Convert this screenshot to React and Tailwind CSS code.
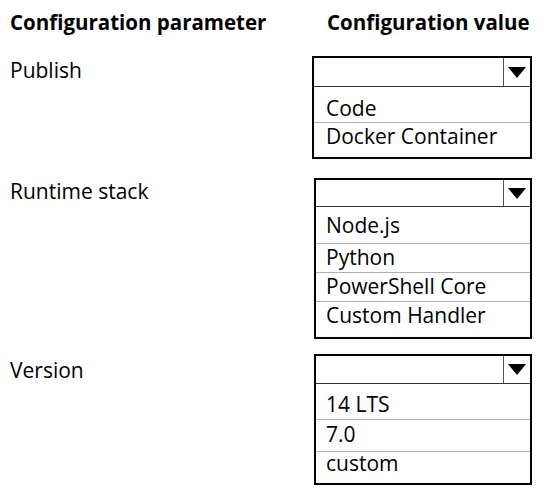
function Dropdown({ items, width, head, rows, pad }) {
  return (
    <div className={`border-2 border-black ${width}`}>
      <div className={`flex ${head} border-b border-[#333]`}>
        <div className="flex-1" />
        <div className="w-[27px] border-l border-[#555] flex items-center justify-center">
          <svg width="18" height="11" viewBox="0 0 18 11">
            <polygon points="0,0 18,0 9,11" fill="#000" />
          </svg>
        </div>
      </div>
      <div className={rows}>
        {items.map((item, i) => (
          <div
            key={item.label}
            className={`${i > 0 ? "border-t border-[#b0b0b0]" : ""} ${item.cls} ${pad}`}
          >
            {item.label}
          </div>
        ))}
      </div>
    </div>
  );
}

export default function App() {
  return (
    <div className="w-[550px] h-[500px] bg-white overflow-hidden text-black text-[21px] font-['Open_Sans',sans-serif]">
      <div className="flex pt-[9px] font-bold text-[20.5px] leading-[26px]">
        <div className="w-[327px] pl-[10px]">Configuration parameter</div>
        <div>Configuration value</div>
      </div>

      <div className="flex mt-[21px]">
        <div className="w-[312px] pl-[10px] leading-[26px] pt-[1px]">Publish</div>
        <Dropdown
          width="w-[220px]"
          head="h-[29px]"
          rows="pt-[8px] pb-[6px]"
          pad="pl-[12px]"
          items={[
            { label: "Code", cls: "leading-[26px] pb-[1px]" },
            { label: "Docker Container", cls: "leading-[26px] pb-[2px]" },
          ]}
        />
      </div>

      <div className="flex mt-[19px]">
        <div className="w-[314px] pl-[10px] leading-[26px]">Runtime stack</div>
        <Dropdown
          width="w-[218px]"
          head="h-[27px]"
          rows="pt-[5px] pb-[7px]"
          pad="pl-[10px]"
          items={[
            { label: "Node.js", cls: "leading-[26px] pb-[5px]" },
            { label: "Python", cls: "leading-[26px] pb-[2px]" },
            { label: "PowerShell Core", cls: "leading-[26px] pb-[2px]" },
            { label: "Custom Handler", cls: "leading-[26px] pb-[2px]" },
          ]}
        />
      </div>

      <div className="flex mt-[15px]">
        <div className="w-[314px] pl-[10px] leading-[26px] pt-[3px]">Version</div>
        <Dropdown
          width="w-[218px]"
          head="h-[28px]"
          rows="pt-[7px] pb-[9px]"
          pad="pl-[10px]"
          items={[
            { label: "14 LTS", cls: "leading-[26px] pb-[2px]" },
            { label: "7.0", cls: "leading-[26px] pt-[1px] pb-[4px]" },
            { label: "custom", cls: "leading-[22px]" },
          ]}
        />
      </div>
    </div>
  );
}
